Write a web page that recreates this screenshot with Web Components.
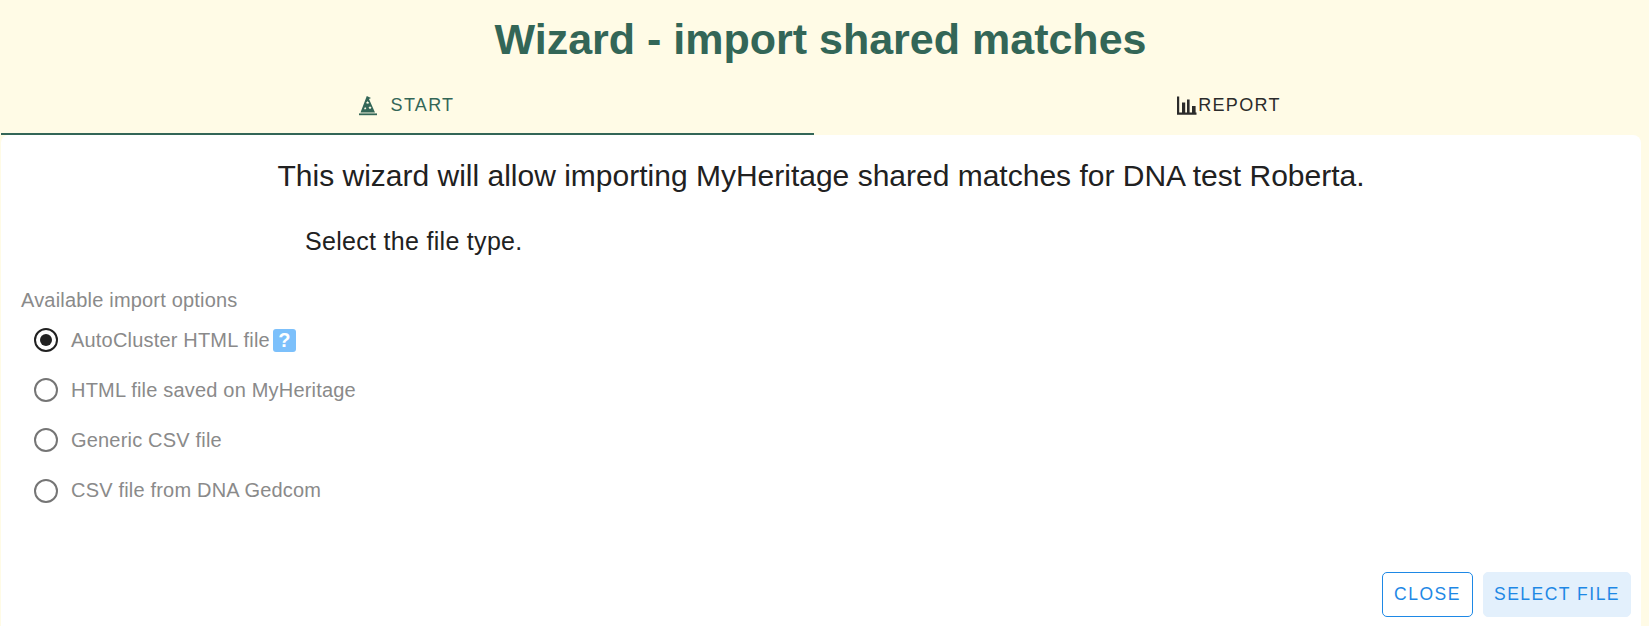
<!DOCTYPE html>
<html>
<head>
<meta charset="utf-8">
<style>
  html, body { margin: 0; padding: 0; height: 100%; background: #fffbe6; overflow: hidden; }
  body { font-family: "Liberation Sans", Arial, sans-serif; }
</style>
</head>
<body>
<wizard-dialog heading="Wizard - import shared matches">
  <wizard-tab slot="tabs" label="START" icon="wizard" active></wizard-tab>
  <wizard-tab slot="tabs" label="REPORT" icon="chart"></wizard-tab>

  <p class="intro">This wizard will allow importing MyHeritage shared matches for DNA test Roberta.</p>
  <radio-group legend="Available import options" hint="Select the file type.">
    <radio-option checked help>AutoCluster HTML file</radio-option>
    <radio-option>HTML file saved on MyHeritage</radio-option>
    <radio-option>Generic CSV file</radio-option>
    <radio-option>CSV file from DNA Gedcom</radio-option>
  </radio-group>

  <wizard-button slot="actions" variant="outlined">Close</wizard-button>
  <wizard-button slot="actions" variant="tonal">Select file</wizard-button>
</wizard-dialog>

<script>
const ICONS = {
  wizard: `<svg width="24" height="24" viewBox="0 0 24 24" fill="currentColor">
    <path fill-rule="evenodd" d="M4.5 19.5 10.8 3l4.2 2-2 .9L19 19.5ZM11.6 8l.5 1 1.1.2-.8.8.2 1.1-1-.5-1 .5.2-1.1-.8-.8 1.1-.2ZM14 13l.5 1 1.1.2-.8.8.2 1.1-1-.5-1 .5.2-1.1-.8-.8 1.1-.2ZM9.2 14l.4.8.9.1-.6.6.1.9-.8-.4-.8.4.1-.9-.6-.6.9-.1Z"/>
    <rect x="3" y="20.4" width="18" height="1.8"/>
  </svg>`,
  chart: `<svg width="24" height="24" viewBox="0 0 24 24" fill="currentColor">
    <path d="M3 3.5h2.2V20H3zM3 19.6h19.5v2.2H3zM8 9.5h3.2v10.5H8zM13 6.5h2.6V20H13zM18 13h3.6v7H18z"/>
  </svg>`
};

class WizardDialog extends HTMLElement {
  constructor() {
    super();
    this.shadowDOM = this.attachShadow({ mode: 'open' });
  }

  connectedCallback() {
    this.shadowDOM.innerHTML = `
      <style>
        :host { display: flex; flex-direction: column; height: 626px; background: #fffbe6; }
        h1 {
          box-sizing: border-box;
          margin: 0;
          height: 84px;
          padding: 0 8px 5px 0;
          display: flex;
          align-items: center;
          justify-content: center;
          color: #336657;
          font: 700 43px/1 "Liberation Sans", Arial, sans-serif;
        }
        .tabs { display: grid; grid-template-columns: 813px 1fr; height: 51px; padding: 0 8px 0 1px; }
        .card {
          flex: 1;
          display: flex;
          flex-direction: column;
          margin: 0 8px 0 1px;
          background: #fff;
          border-radius: 8px 8px 0 0;
          color: #212121;
        }
        .content { flex: 1; }
        .actions { display: flex; justify-content: flex-end; gap: 10px; padding: 0 10px 9px 0; }
        ::slotted(p.intro) {
          margin: 0;
          padding-top: 21px;
          text-align: center;
          font-size: 30px;
          line-height: 40px;
        }
      </style>
      <h1>${this.getAttribute('heading')}</h1>
      <div class="tabs"><slot name="tabs"></slot></div>
      <div class="card">
        <div class="content"><slot></slot></div>
        <div class="actions"><slot name="actions"></slot></div>
      </div>
    `;
  }
}

class WizardTab extends HTMLElement {
  constructor() {
    super();
    this.shadowDOM = this.attachShadow({ mode: 'open' });
  }

  connectedCallback() {
    const active = this.hasAttribute('active');
    this.shadowDOM.innerHTML = `
      <style>
        :host {
          display: flex;
          align-items: center;
          justify-content: center;
          box-sizing: border-box;
          padding: 0 ${active ? '5px' : '0'} 7px 0;
          gap: ${active ? '11px' : '0'};
          color: ${active ? '#336657' : '#2b2b2b'};
          font: 400 18px/1 "Liberation Sans", Arial, sans-serif;
          letter-spacing: 1.3px;
          border-bottom: 2px solid ${active ? '#336657' : 'transparent'};
        }
        svg { display: block; }
      </style>
      ${ICONS[this.getAttribute('icon')]}
      <span>${this.getAttribute('label')}</span>
    `;
  }
}

class RadioGroup extends HTMLElement {
  constructor() {
    super();
    this.shadowDOM = this.attachShadow({ mode: 'open' });
  }

  connectedCallback() {
    this.shadowDOM.innerHTML = `
      <style>
        :host { display: block; }
        .hint { margin: 0; padding: 29px 0 0 304px; font-size: 25px; line-height: 32px; letter-spacing: 0.3px; color: #212121; }
        .legend { padding: 31px 0 0 20px; font-size: 20px; line-height: 24px; letter-spacing: 0.19px; color: #8a8a8a; }
        .options { display: flex; flex-direction: column; padding: 3px 0 0 20px; }
      </style>
      <p class="hint">${this.getAttribute('hint')}</p>
      <div class="legend">${this.getAttribute('legend')}</div>
      <div class="options"><slot></slot></div>
    `;
  }
}

class RadioOption extends HTMLElement {
  constructor() {
    super();
    this.shadowDOM = this.attachShadow({ mode: 'open' });
  }

  connectedCallback() {
    const checked = this.hasAttribute('checked');
    this.shadowDOM.innerHTML = `
      <style>
        :host {
          display: flex;
          align-items: center;
          height: 50.2px;
          color: #8a8a8a;
          font-size: 20px;
          letter-spacing: 0.19px;
        }
        .radio { width: 50px; display: flex; justify-content: center; flex: none; }
        .help {
          display: flex;
          align-items: center;
          justify-content: center;
          width: 23px;
          height: 23px;
          margin-left: 3px;
          border-radius: 3px;
          background: #7cc0fb;
          color: #fff;
          font: 700 20px/1 "Liberation Sans", sans-serif;
        }
      </style>
      <span class="radio">
        <svg width="26" height="26" viewBox="0 0 26 26">
          <circle cx="13" cy="13" r="11" fill="none" stroke="${checked ? '#212121' : '#757575'}" stroke-width="2"/>
          ${checked ? '<circle cx="13" cy="13" r="6" fill="#212121"/>' : ''}
        </svg>
      </span>
      <span><slot></slot></span>
      ${this.hasAttribute('help') ? '<span class="help">?</span>' : ''}
    `;
  }
}

class WizardButton extends HTMLElement {
  constructor() {
    super();
    this.shadowDOM = this.attachShadow({ mode: 'open' });
  }

  connectedCallback() {
    const outlined = this.getAttribute('variant') === 'outlined';
    this.shadowDOM.innerHTML = `
      <style>
        :host {
          display: flex;
          align-items: center;
          justify-content: center;
          box-sizing: border-box;
          height: 45px;
          width: ${outlined ? '91px' : '148px'};
          border-radius: 5px;
          border: 1px solid ${outlined ? '#1e88e5' : '#e3f0fc'};
          background: ${outlined ? '#fff' : '#e3f0fc'};
          color: #1e88e5;
          font: 400 17.5px/1 "Liberation Sans", Arial, sans-serif;
          letter-spacing: 1.5px;
          text-transform: uppercase;
        }
      </style>
      <slot></slot>
    `;
  }
}

customElements.define('wizard-dialog', WizardDialog);
customElements.define('wizard-tab', WizardTab);
customElements.define('radio-group', RadioGroup);
customElements.define('radio-option', RadioOption);
customElements.define('wizard-button', WizardButton);
</script>
</body>
</html>
